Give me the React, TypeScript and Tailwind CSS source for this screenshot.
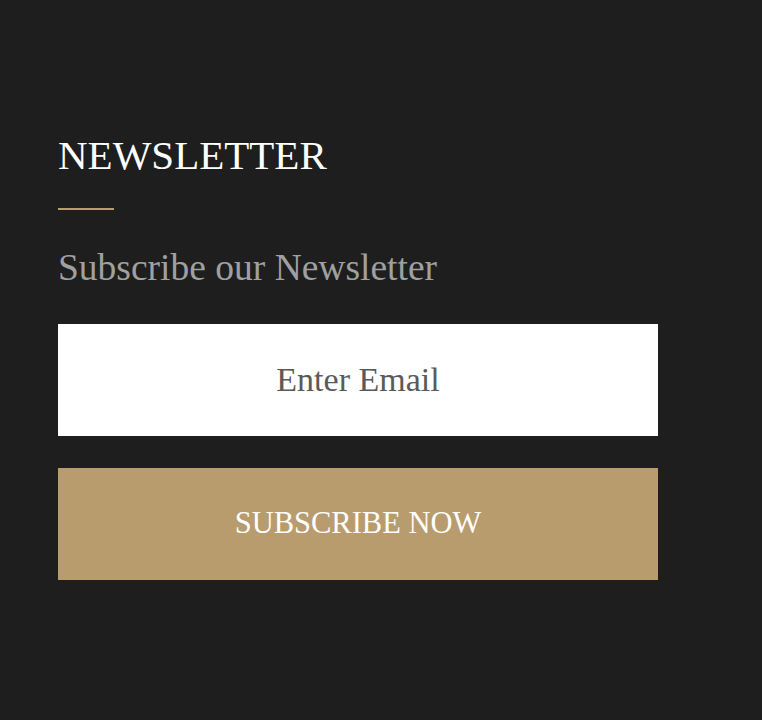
import React from "react";

export default function App() {
    return (
        <div className="min-h-[720px] w-full bg-[#1e1e1e] px-[58px] pt-[129px] font-['Liberation_Serif',serif]">
            <h2 className="text-[41px] leading-[52px] text-white">
                NEWSLETTER
            </h2>
            <div className="mt-[27px] h-[2px] w-[56px] bg-[#b99c6c]" />
            <p className="mt-[38px] text-[37.5px] leading-[40px] text-[#a0a0a0]">
                Subscribe our Newsletter
            </p>
            <form
                className="mt-[36px] flex w-[600px] flex-col gap-[32px]"
                onSubmit={(e) => e.preventDefault()}
            >
                <input
                    type="email"
                    placeholder="Enter Email"
                    className="h-[112px] w-full bg-white text-center text-[34px] text-[#555] outline-none placeholder:text-[#5a5a5a]"
                />
                <button
                    type="submit"
                    className="h-[112px] w-full bg-[#b99c6d] text-[30.5px] text-white"
                >
                    SUBSCRIBE NOW
                </button>
            </form>
        </div>
    );
}
